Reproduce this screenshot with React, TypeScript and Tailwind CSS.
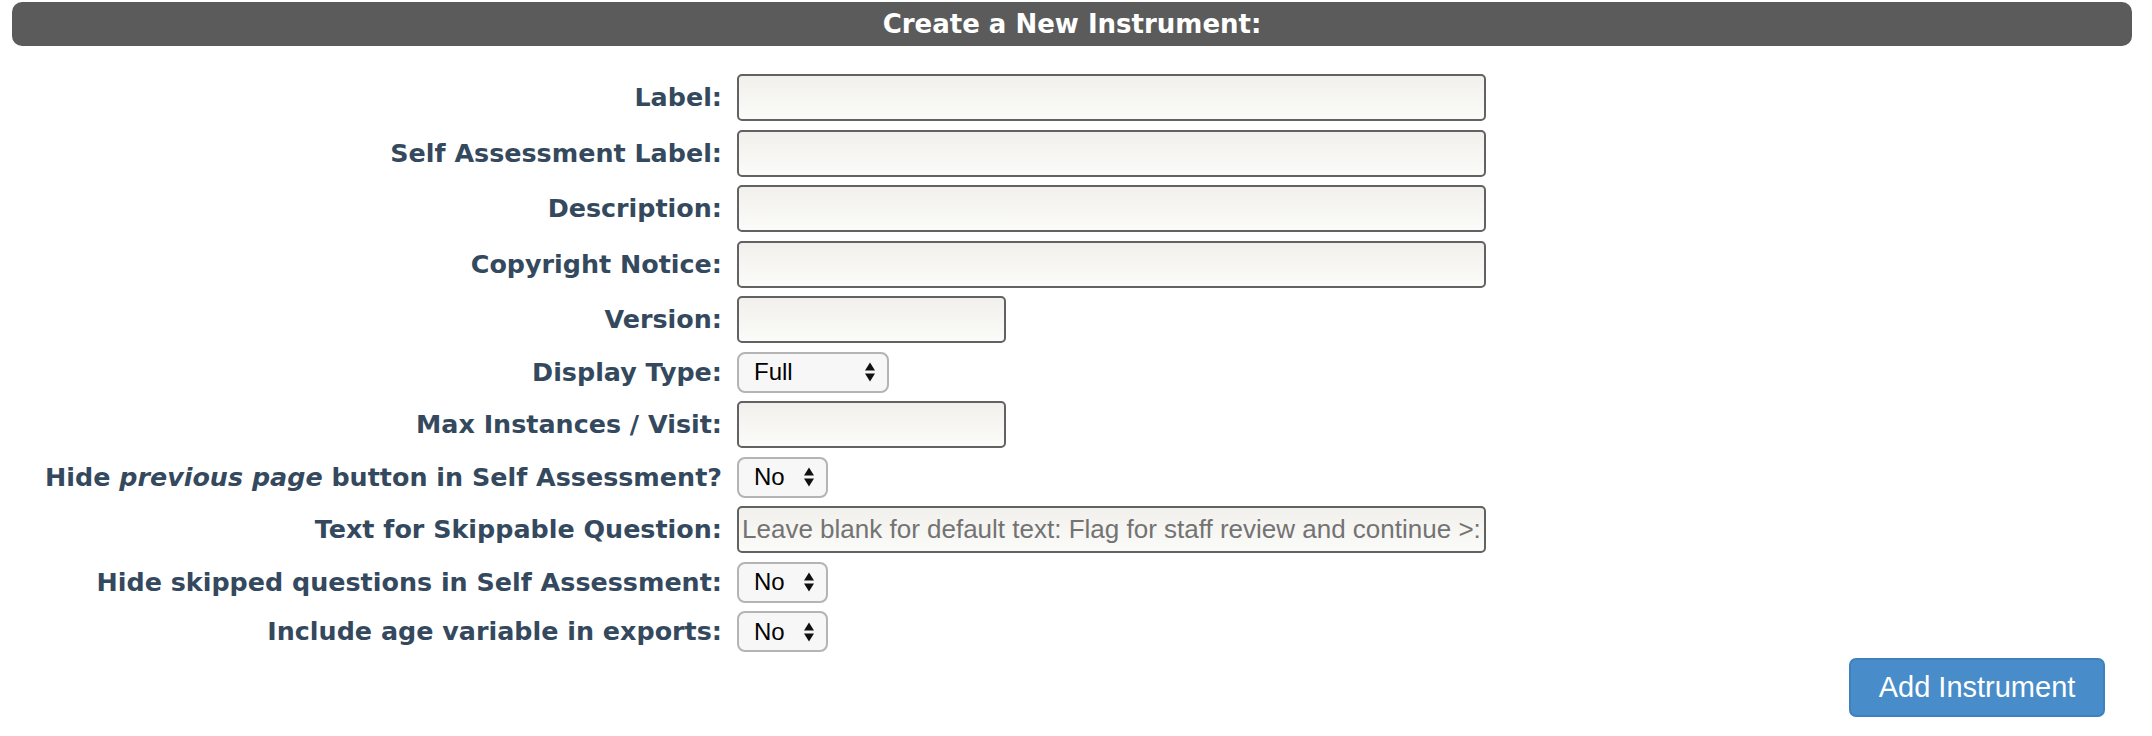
import React from "react";

type Row =
  | { label: React.ReactNode; kind: "text"; width: string; placeholder?: string }
  | { label: React.ReactNode; kind: "select"; width: string; value: string; options: string[] };

const rows: Row[] = [
  { label: "Label:", kind: "text", width: "w-[749px]" },
  { label: "Self Assessment Label:", kind: "text", width: "w-[749px]" },
  { label: "Description:", kind: "text", width: "w-[749px]" },
  { label: "Copyright Notice:", kind: "text", width: "w-[749px]" },
  { label: "Version:", kind: "text", width: "w-[269px]" },
  { label: "Display Type:", kind: "select", width: "w-[152px]", value: "Full", options: ["Full", "Compact"] },
  { label: "Max Instances / Visit:", kind: "text", width: "w-[269px]" },
  {
    label: (
      <>
        Hide <em>previous page</em> button in Self Assessment?
      </>
    ),
    kind: "select",
    width: "w-[91px]",
    value: "No",
    options: ["No", "Yes"],
  },
  {
    label: "Text for Skippable Question:",
    kind: "text",
    width: "w-[749px]",
    placeholder: "Leave blank for default text: Flag for staff review and continue >:",
  },
  { label: "Hide skipped questions in Self Assessment:", kind: "select", width: "w-[91px]", value: "No", options: ["No", "Yes"] },
  { label: "Include age variable in exports:", kind: "select", width: "w-[91px]", value: "No", options: ["No", "Yes"] },
];

function Arrows() {
  return (
    <svg width="12" height="21" viewBox="0 0 12 21" className="pointer-events-none absolute right-[13px] top-1/2 -translate-y-1/2">
      <path d="M6 1 L11 9 L1 9 Z" fill="#111" />
      <path d="M6 20 L11 12 L1 12 Z" fill="#111" />
    </svg>
  );
}

function TextField({ width, placeholder }: { width: string; placeholder?: string }) {
  return (
    <input
      type="text"
      placeholder={placeholder}
      className={`${width} h-[47px] rounded-[5px] border-2 border-[#626262] bg-gradient-to-b from-[#f1f0ec] to-[#fbfbf9] pl-[3px] font-['Liberation_Sans',sans-serif] text-[26px] text-[#222] placeholder:text-[#737373] outline-none`}
    />
  );
}

function SelectField({ width, value, options }: { width: string; value: string; options: string[] }) {
  return (
    <div className={`relative ${width} h-[41px]`}>
      <select
        defaultValue={value}
        className="h-full w-full appearance-none rounded-[8px] border-2 border-[#b4b4b4] bg-[#f7f7f7] pl-[15px] font-['Liberation_Sans',sans-serif] text-[24px] text-black outline-none"
      >
        {options.map((o) => (
          <option key={o}>{o}</option>
        ))}
      </select>
      <Arrows />
    </div>
  );
}

export default function App() {
  return (
    <div className="h-[736px] w-[2152px] overflow-hidden bg-white font-['DejaVu_Sans',sans-serif]">
      <div className="ml-[12px] mr-[20px] mt-[2px] flex h-[44px] items-center justify-center rounded-[10px] bg-[#5b5b5b] text-[26px] font-bold text-white">
        Create a New Instrument:
      </div>

      <form className="mt-[28px]">
        <div className="grid grid-cols-[722px_auto] gap-x-[15px] gap-y-[8.5px]">
          {rows.map((r, i) => (
            <React.Fragment key={i}>
              <label className="flex items-center justify-end text-right text-[25.4px] font-bold text-[#34495e]">
                <span>{r.label}</span>
              </label>
              <div className="flex items-center">
                {r.kind === "text" ? (
                  <TextField width={r.width} placeholder={r.placeholder} />
                ) : (
                  <SelectField width={r.width} value={r.value} options={r.options} />
                )}
              </div>
            </React.Fragment>
          ))}
        </div>

        <div className="mt-[6px] flex justify-end pr-[47px]">
          <button
            type="button"
            className="h-[59px] w-[256px] rounded-[7px] border-2 border-[#3f81bf] bg-[#488dc9] font-['Liberation_Sans',sans-serif] text-[29px] text-white"
          >
            Add Instrument
          </button>
        </div>
      </form>
    </div>
  );
}
